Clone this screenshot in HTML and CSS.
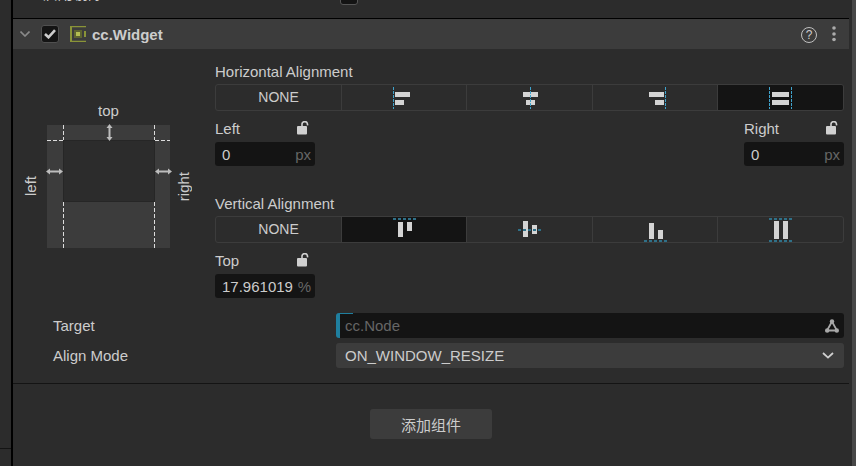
FILE: index.html
```html
<!DOCTYPE html>
<html lang="zh">
<head>
    <meta charset="UTF-8">
    <title>cc.Widget</title>
    <link rel="stylesheet" href="styles.css">
</head>
<body>
    <div class="gutter"><div class="gutter-top"></div></div>

    <div class="panel">
        <div class="prev-row">
            <span class="prev-label">启用剔除</span>
            <span class="prev-check"></span>
        </div>

        <div class="comp-header">
            <svg class="fold" width="10" height="6" viewBox="0 0 10 6"><path d="M0.5 0.5 L5 5 L9.5 0.5" fill="none" stroke="#8a8a8a" stroke-width="1.6"/></svg>
            <span class="checkbox">
                <svg width="12" height="10" viewBox="0 0 12 10"><path d="M1 5 L4.5 8.3 L11 1.2" fill="none" stroke="#cccccc" stroke-width="2.6"/></svg>
            </span>
            <svg class="comp-icon" width="16" height="16" viewBox="0 0 16 16">
                <path d="M0 0H16V1.2H2V14.8H16V16H0Z" fill="#8a9438"/>
                <rect x="14" y="5" width="2" height="6" fill="#8a9438"/>
                <rect x="4" y="4" width="8" height="8" fill="#5d6330"/>
                <rect x="6" y="6" width="4" height="4" fill="#b4be52"/>
            </svg>
            <span class="comp-title">cc.Widget</span>
            <span class="help">?</span>
            <svg class="more" width="4" height="16" viewBox="0 0 4 16">
                <circle cx="2" cy="2" r="1.8" fill="#ababab"/>
                <circle cx="2" cy="8" r="1.8" fill="#ababab"/>
                <circle cx="2" cy="13.5" r="1.8" fill="#ababab"/>
            </svg>
        </div>

        <div class="widget">
            <div class="diagram">
                <span class="side-top">top</span>
                <span class="side-label side-left">left</span>
                <svg class="box" width="123" height="123" viewBox="0 0 123 123">
                    <rect width="123" height="123" fill="#3c3c3c"/>
                    <rect x="16.5" y="15.5" width="91" height="61" fill="#2c2c2c" stroke="#262626"/>
                    <g stroke="#dcdcdc" stroke-dasharray="4 2" fill="none">
                        <path d="M16.5 0V15"/>
                        <path d="M107.5 0V15"/>
                        <path d="M16.5 77V123"/>
                        <path d="M107.5 77V123"/>
                        <path d="M0 15.5H16"/>
                        <path d="M108 15.5H123"/>
                    </g>
                    <g fill="#bdbdbd">
                        <path d="M61.5 2.5h2v10h-2z"/>
                        <path d="M62.5 -1l3 4h-6z"/>
                        <path d="M62.5 16l3 -4h-6z"/>
                        <path d="M2 45.5h11v2h-11z"/>
                        <path d="M-1 46.5l4 -3v6z"/>
                        <path d="M16 46.5l-4 -3v6z"/>
                        <path d="M111 45.5h11v2h-11z"/>
                        <path d="M108 46.5l4 -3v6z"/>
                        <path d="M125 46.5l-4 -3v6z"/>
                    </g>
                </svg>
                <span class="side-label">right</span>
            </div>

            <div class="align">
                <div class="label">Horizontal Alignment</div>
                <div class="seg-group">
                    <div class="seg">NONE</div>
                    <div class="seg">
                        <svg width="28" height="25" viewBox="0 0 28 25">
                            <path d="M3.5 2V24" class="guide"/>
                            <rect x="5" y="7" width="15" height="5" class="bar"/>
                            <rect x="5" y="15" width="9" height="5" class="bar"/>
                        </svg>
                    </div>
                    <div class="seg">
                        <svg width="29" height="25" viewBox="0 0 29 25">
                            <rect x="8" y="7" width="15" height="5" class="bar"/>
                            <rect x="11" y="15" width="9" height="5" class="bar"/>
                            <path d="M15.5 2V24" class="guide"/>
                        </svg>
                    </div>
                    <div class="seg">
                        <svg width="28" height="25" viewBox="0 0 28 25">
                            <path d="M24.5 2V24" class="guide"/>
                            <rect x="8" y="7" width="15" height="5" class="bar"/>
                            <rect x="14" y="15" width="9" height="5" class="bar"/>
                        </svg>
                    </div>
                    <div class="seg on">
                        <svg width="29" height="25" viewBox="0 0 29 25">
                            <path d="M3.5 2V24" class="guide"/>
                            <path d="M25.5 2V24" class="guide"/>
                            <rect x="6" y="7" width="17" height="5" class="bar"/>
                            <rect x="6" y="15" width="17" height="5" class="bar"/>
                        </svg>
                    </div>
                </div>

                <div class="fields">
                    <div class="field">
                        <div class="field-label">Left
                            <svg width="14" height="14" viewBox="0 0 14 14"><rect y="5" width="10" height="8.5" rx="1" fill="#d0d0d0"/><path d="M5 5.5V3.6a2.7 2.7 0 0 1 5.4 -0.6l0.3 1.4" fill="none" stroke="#d0d0d0" stroke-width="1.6"/></svg>
                        </div>
                        <div class="num"><span>0</span><span class="unit">px</span></div>
                    </div>
                    <div class="field">
                        <div class="field-label">Right
                            <svg width="14" height="14" viewBox="0 0 14 14"><rect y="5" width="10" height="8.5" rx="1" fill="#d0d0d0"/><path d="M5 5.5V3.6a2.7 2.7 0 0 1 5.4 -0.6l0.3 1.4" fill="none" stroke="#d0d0d0" stroke-width="1.6"/></svg>
                        </div>
                        <div class="num"><span>0</span><span class="unit">px</span></div>
                    </div>
                </div>

                <div class="label label-v">Vertical Alignment</div>
                <div class="seg-group">
                    <div class="seg">NONE</div>
                    <div class="seg on">
                        <svg width="28" height="25" viewBox="0 0 28 25">
                            <path d="M3 2H26" class="guide-v"/>
                            <rect x="8" y="5" width="5" height="15" class="bar"/>
                            <rect x="17" y="5" width="5" height="9" class="bar"/>
                        </svg>
                    </div>
                    <div class="seg">
                        <svg width="29" height="25" viewBox="0 0 29 25">
                            <rect x="8" y="4" width="5" height="16" class="bar"/>
                            <rect x="17" y="8" width="5" height="9" class="bar"/>
                            <path d="M3 13H26" class="guide-v"/>
                        </svg>
                    </div>
                    <div class="seg">
                        <svg width="28" height="25" viewBox="0 0 28 25">
                            <path d="M3 24H26" class="guide-v"/>
                            <rect x="8" y="6" width="5" height="16" class="bar"/>
                            <rect x="17" y="13" width="5" height="9" class="bar"/>
                        </svg>
                    </div>
                    <div class="seg">
                        <svg width="29" height="25" viewBox="0 0 29 25">
                            <path d="M3 2H26" class="guide-v"/>
                            <path d="M3 24H26" class="guide-v"/>
                            <rect x="8" y="4" width="5" height="18" class="bar"/>
                            <rect x="17" y="4" width="5" height="18" class="bar"/>
                        </svg>
                    </div>
                </div>

                <div class="fields">
                    <div class="field">
                        <div class="field-label">Top
                            <svg width="14" height="14" viewBox="0 0 14 14"><rect y="5" width="10" height="8.5" rx="1" fill="#d0d0d0"/><path d="M5 5.5V3.6a2.7 2.7 0 0 1 5.4 -0.6l0.3 1.4" fill="none" stroke="#d0d0d0" stroke-width="1.6"/></svg>
                        </div>
                        <div class="num"><span class="clip">17.961019</span><span class="unit">%</span></div>
                    </div>
                </div>
            </div>
        </div>

        <div class="prop">
            <span class="prop-name">Target</span>
            <div class="prop-value node-input">
                <span class="placeholder">cc.Node</span>
                <svg width="14" height="14" viewBox="0 0 14 14">
                    <path d="M7 2.5L2 11.5H12Z" fill="none" stroke="#a8a8a8" stroke-width="1.8"/>
                    <circle cx="7" cy="2.5" r="2.2" fill="#a8a8a8"/>
                    <circle cx="2.2" cy="11.5" r="2.2" fill="#a8a8a8"/>
                    <circle cx="11.8" cy="11.5" r="2.2" fill="#a8a8a8"/>
                </svg>
            </div>
        </div>
        <div class="prop">
            <span class="prop-name">Align Mode</span>
            <div class="prop-value select">
                <span>ON_WINDOW_RESIZE</span>
                <svg width="12" height="7" viewBox="0 0 12 7"><path d="M1 1L6 5.6L11 1" fill="none" stroke="#d0d0d0" stroke-width="1.8"/></svg>
            </div>
        </div>

        <div class="add-row">
            <button class="add-btn">添加组件</button>
        </div>
    </div>

    <div class="scroll-track"><div class="scroll-thumb"></div></div>
</body>
</html>
```

FILE: styles.css
```css
html, body {
    height: 100%;
}
body {
    margin: 0;
    display: flex;
    overflow: hidden;
    background: #2c2c2c;
    color: #cccccc;
    font-family: "Liberation Sans", "Noto Sans CJK SC", sans-serif;
    font-size: 15px;
}
.gutter {
    width: 11px;
    flex: none;
    border-right: 2px solid #000;
}
.gutter-top {
    height: 448px;
    border-bottom: 1px solid #141414;
}
.panel {
    width: 836px;
    flex: none;
}
.prev-row {
    height: 18px;
    overflow: hidden;
    display: flex;
    border-bottom: 1px solid #000;
}
.prev-label {
    margin: -16px 0 0 30px;
    line-height: 19px;
}
.prev-check {
    margin: -13px 0 0 237px;
    width: 16px;
    height: 16px;
    background: #141414;
    border: 1px solid #555;
    border-radius: 3px;
}
.comp-header {
    height: 30px;
    background: #3c3c3c;
    display: flex;
    align-items: center;
}
.fold {
    margin-left: 7px;
}
.checkbox {
    width: 16px;
    height: 16px;
    margin-left: 11px;
    background: #141414;
    border: 1px solid #505050;
    border-radius: 3px;
    display: flex;
    align-items: center;
    justify-content: center;
}
.comp-icon {
    margin-left: 11px;
}
.comp-title {
    margin-left: 6px;
    font-weight: bold;
}
.help {
    width: 14px;
    height: 14px;
    margin: 1px 0 0 auto;
    border: 1.5px solid #c0c0c0;
    border-radius: 50%;
    font-size: 12px;
    line-height: 14px;
    text-align: center;
}
.more {
    margin: 0 13px 0 15px;
}

.widget {
    display: flex;
}
.diagram {
    width: 202px;
    flex: none;
    padding-top: 52px;
    display: grid;
    grid-template-columns: 34px 123px 28px;
    grid-template-rows: 20px 123px;
    row-gap: 4px;
    align-content: start;
    box-sizing: border-box;
}
.side-top {
    grid-column: 2;
    line-height: 20px;
    text-align: center;
}
.side-label {
    grid-row: 2;
    justify-self: center;
    align-self: center;
    writing-mode: vertical-rl;
    transform: rotate(180deg);
    line-height: 16px;
}
.side-left {
    margin-left: 2px;
}
.box {
    grid-row: 2;
    overflow: visible;
}

.align {
    width: 629px;
    padding-top: 13px;
}
.label {
    line-height: 20px;
    margin-bottom: 2px;
}
.label-v {
    margin-top: 28px;
}
.seg-group {
    height: 27px;
    box-sizing: border-box;
    border: 1px solid #3c3c3c;
    border-radius: 3px;
    display: grid;
    grid-template-columns: 125px 125px 126px 125px 126px;
    font-size: 14px;
    overflow: hidden;
}
.seg {
    display: flex;
    align-items: center;
    justify-content: center;
    border-left: 1px solid #3c3c3c;
}
.seg:first-child {
    border-left: none;
    padding-bottom: 2px;
}
.seg svg {
    overflow: visible;
}
.seg.on {
    background: #141414;
}
.bar {
    fill: #d4d4d4;
}
.guide {
    fill: none;
    stroke: #3fa3cc;
    stroke-dasharray: 3 1;
}
.guide-v {
    fill: none;
    stroke: #2f7088;
    stroke-width: 2;
    stroke-dasharray: 3 2;
}
.fields {
    display: flex;
    justify-content: space-between;
    margin-top: 7px;
}
.field {
    width: 100px;
}
.field-label {
    height: 20px;
    display: flex;
    align-items: center;
    justify-content: space-between;
    margin-bottom: 4px;
    padding-right: 4px;
}
.num {
    height: 24px;
    background: #141414;
    border-radius: 3px;
    display: flex;
    align-items: center;
    justify-content: space-between;
    padding: 0 4px 0 7px;
}
.clip {
    width: 71px;
    overflow: hidden;
    white-space: nowrap;
}
.num span:first-child:not(.clip) {
    width: 20px;
}
.unit {
    color: #666;
}

.prop {
    display: flex;
    align-items: center;
    height: 25px;
    margin-bottom: 5px;
    padding-left: 40px;
}
.widget + .prop {
    margin-top: 15px;
}
.prop-name {
    width: 283px;
    flex: none;
}
.prop-value {
    width: 508px;
    height: 25px;
    box-sizing: border-box;
    border-radius: 3px;
    display: flex;
    align-items: center;
    justify-content: space-between;
}
.node-input {
    background: linear-gradient(#1f7f9f, #1f7f9f) left top / 13px 1px no-repeat, #141414;
    border-left: 4px solid #1f7f9f;
    padding: 0 5px 0 5px;
}
.placeholder {
    color: #666;
}
.select {
    background: #3c3c3c;
    padding: 0 10px 0 9px;
}
.add-row {
    margin-top: 15px;
    border-top: 1px solid #141414;
    padding-top: 25px;
    display: flex;
    padding-left: 357px;
}
.add-btn {
    width: 122px;
    height: 30px;
    background: #3c3c3c;
    color: #cccccc;
    border: none;
    border-radius: 3px;
    font: inherit;
}
.scroll-track {
    flex: 1;
    display: flex;
    justify-content: flex-end;
}
.scroll-thumb {
    width: 4px;
    background: #484848;
}
```
